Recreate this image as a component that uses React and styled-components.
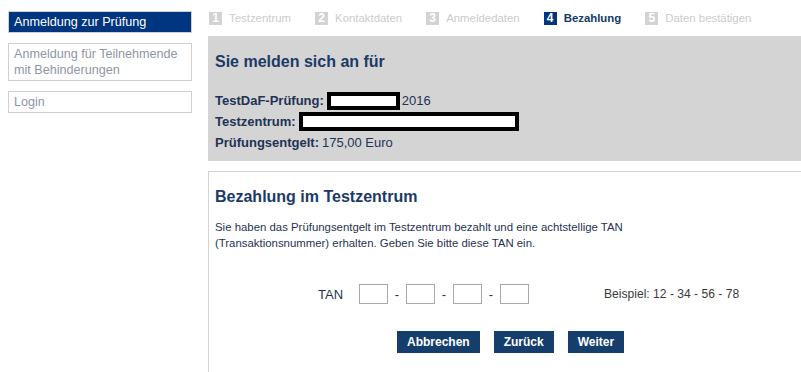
import React from 'react';
import styled, { createGlobalStyle } from 'styled-components';

const GlobalStyle = createGlobalStyle`
  html, body {
    margin: 0;
    padding: 0;
    background: #fff;
    overflow: hidden;
  }
  body {
    font-family: "Liberation Sans", Arial, sans-serif;
    font-size: 13px;
    color: #1f3354;
  }
`;

const Page = styled.div`
  display: flex;
  align-items: flex-start;
  width: 812px;
`;

const Sidebar = styled.nav`
  width: 184px;
  margin: 11px 0 0 8px;
  display: flex;
  flex-direction: column;
  gap: 10px;
`;

const NavItem = styled.div`
  border: 1px solid #d0d0d0;
  padding: 2px 5px;
  line-height: 16px;
  font-size: 12.6px;
  background: ${p => (p.active ? '#003580' : '#fff')};
  color: ${p => (p.active ? '#fff' : '#8d96a5')};
`;

const Main = styled.main`
  flex: 1;
  margin-left: 16px;
`;

const Steps = styled.div`
  display: flex;
  gap: 24px;
  height: 16px;
  margin: 10px 0 10px 1px;
  align-items: center;
`;

const Step = styled.div`
  display: flex;
  align-items: center;
  gap: 7px;
  font-size: 11.4px;
  color: ${p => (p.active ? '#153a6b' : '#cbcbcb')};
  font-weight: ${p => (p.active ? 'bold' : 'normal')};
`;

const StepNum = styled.span`
  width: 13px;
  height: 13px;
  display: inline-flex;
  align-items: center;
  justify-content: center;
  font-size: 12px;
  font-weight: bold;
  color: #fff;
  background: ${p => (p.active ? '#003580' : '#d3d3d3')};
`;

const InfoBox = styled.section`
  background: #d4d4d4;
  padding: 14px 7px 8px;
`;

const Heading = styled.h2`
  margin: 0;
  font-size: 16px;
  line-height: 24px;
  font-weight: bold;
  color: #1b3a66;
`;

const InfoRows = styled.div`
  margin-top: 16px;
`;

const InfoRow = styled.div`
  line-height: 21px;
  height: 21px;
  display: flex;
  align-items: center;
  color: #1f3354;
`;

const Label = styled.b`
  margin-right: 3px;
`;

const Redacted = styled.span`
  display: inline-block;
  box-sizing: border-box;
  width: ${p => p.w}px;
  height: ${p => p.h}px;
  border: 4px solid #000;
  background: #fff;
  margin-right: 2px;
`;

const PayBox = styled.section`
  margin-top: 10px;
  border-top: 1px solid #d4d4d4;
  border-left: 1px solid #d4d4d4;
  padding: 13px 7px 30px 6px;
`;

const Text = styled.p`
  margin: 11px 0 0;
  line-height: 15.5px;
  font-size: 11.4px;
  color: #1f3354;
`;

const TanRow = styled.div`
  display: flex;
  align-items: center;
  margin: 33px 0 0 103px;
  height: 20px;
`;

const TanLabel = styled.span`
  width: 41px;
  color: #1f3354;
`;

const TanInput = styled.input`
  box-sizing: border-box;
  width: 29px;
  height: 20px;
  border: 1px solid #a9a9a9;
  padding: 0 3px;
  margin: 0;
  font: inherit;
`;

const Dash = styled.span`
  width: 18px;
  text-align: center;
  color: #333;
`;

const Example = styled.span`
  margin-left: 75px;
  font-size: 12.1px;
  color: #3a3a3a;
`;

const Buttons = styled.div`
  display: flex;
  gap: 14px;
  margin: 27px 0 0 182px;
`;

const Button = styled.button`
  height: 22px;
  padding: 0 10px;
  border: none;
  background: #163e6c;
  color: #fff;
  font-family: "Liberation Sans", Arial, sans-serif;
  font-size: 12px;
  font-weight: bold;
  cursor: pointer;
`;

const steps = ['Testzentrum', 'Kontaktdaten', 'Anmeldedaten', 'Bezahlung', 'Daten bestätigen'];

export default function App() {
  return (
    <>
      <GlobalStyle />
      <Page>
        <Sidebar>
          <NavItem active>Anmeldung zur Prüfung</NavItem>
          <NavItem>Anmeldung für Teilnehmende<br />mit Behinderungen</NavItem>
          <NavItem>Login</NavItem>
        </Sidebar>
        <Main>
          <Steps>
            {steps.map((s, i) => (
              <Step key={s} active={i === 3}>
                <StepNum active={i === 3}>{i + 1}</StepNum>
                {s}
              </Step>
            ))}
          </Steps>
          <InfoBox>
            <Heading>Sie melden sich an für</Heading>
            <InfoRows>
              <InfoRow>
                <Label>TestDaF-Prüfung:</Label>
                <Redacted w={73} h={18} />
                2016
              </InfoRow>
              <InfoRow>
                <Label>Testzentrum:</Label>
                <Redacted w={220} h={19} />
              </InfoRow>
              <InfoRow>
                <Label>Prüfungsentgelt:</Label>
                175,00 Euro
              </InfoRow>
            </InfoRows>
          </InfoBox>
          <PayBox>
            <Heading>Bezahlung im Testzentrum</Heading>
            <Text>
              Sie haben das Prüfungsentgelt im Testzentrum bezahlt und eine achtstellige TAN<br />
              (Transaktionsnummer) erhalten. Geben Sie bitte diese TAN ein.
            </Text>
            <TanRow>
              <TanLabel>TAN</TanLabel>
              <TanInput />
              <Dash>-</Dash>
              <TanInput />
              <Dash>-</Dash>
              <TanInput />
              <Dash>-</Dash>
              <TanInput />
              <Example>Beispiel: 12 - 34 - 56 - 78</Example>
            </TanRow>
            <Buttons>
              <Button>Abbrechen</Button>
              <Button>Zurück</Button>
              <Button>Weiter</Button>
            </Buttons>
          </PayBox>
        </Main>
      </Page>
    </>
  );
}
